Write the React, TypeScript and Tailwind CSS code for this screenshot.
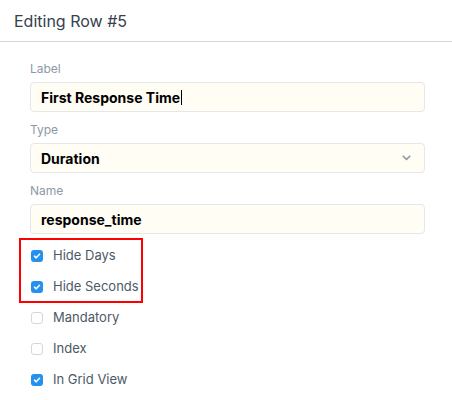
import React from 'react';

const font = { fontFamily: 'Inter, "Noto Sans", sans-serif' };

function Check({ checked }: { checked: boolean }) {
  if (checked) {
    return (
      <span className="flex h-[12px] w-[12px] shrink-0 items-center justify-center rounded-[3px] bg-[#2490ef]">
        <svg width="8" height="8" viewBox="0 0 8 8" fill="none">
          <path d="M1.5 4.2 L3.2 5.8 L6.5 2.3" stroke="white" strokeWidth="1.6" strokeLinecap="round" strokeLinejoin="round" />
        </svg>
      </span>
    );
  }
  return <span className="h-[12px] w-[12px] shrink-0 rounded-[3px] border border-[#d1d8dd] bg-white" />;
}

function CheckRow({ label, checked }: { label: string; checked: boolean }) {
  return (
    <div className="flex h-[31px] items-center gap-[10px] whitespace-nowrap pl-[1px]">
      <Check checked={checked} />
      <span className="text-[13px] text-[#4c5a67]">{label}</span>
    </div>
  );
}

function Field({ label, children }: { label: string; children: React.ReactNode }) {
  return (
    <div className="mb-[9px]">
      <div className="mb-[4px] h-[18px] text-[12px] leading-[18px] text-[#8d99a6]">{label}</div>
      {children}
    </div>
  );
}

export default function App() {
  return (
    <div className="h-[400px] w-[452px] bg-white" style={font}>
      <div className="flex h-[42px] items-center border-b border-[#d1d8dd] px-[14px]">
        <span className="text-[16px] text-[#36414c]">Editing Row #5</span>
      </div>

      <div className="pl-[30px] pr-[27px] pt-[18px]">
        <Field label="Label">
          <div className="flex h-[30px] items-center rounded-[4px] border border-[#e4e8ea] bg-[#fffdf4] px-[10px]">
            <span className="text-[14px] font-bold text-black">First Response Time</span>
            <span className="ml-[1px] h-[15px] w-[1px] bg-black" />
          </div>
        </Field>

        <Field label="Type">
          <div className="flex h-[30px] items-center justify-between rounded-[4px] border border-[#e4e8ea] bg-[#fffdf4] pl-[10px] pr-[13px]">
            <span className="text-[14px] font-bold text-black">Duration</span>
            <svg width="9" height="6" viewBox="0 0 9 6" fill="none">
              <path d="M1.2 1.2 L4.5 4.4 L7.8 1.2" stroke="#8d99a6" strokeWidth="1.6" strokeLinecap="round" strokeLinejoin="round" />
            </svg>
          </div>
        </Field>

        <div>
          <div className="mb-[4px] h-[18px] text-[12px] leading-[18px] text-[#8d99a6]">Name</div>
          <div className="flex h-[30px] items-center rounded-[4px] border border-[#e4e8ea] bg-[#fffdf4] px-[10px]">
            <span className="text-[14px] font-bold text-black">response_time</span>
          </div>
        </div>

        <div className="mt-[6px]">
          <div className="relative w-[102px]">
            <span className="pointer-events-none absolute -left-[11px] -top-[2px] h-[65px] w-[124px] border-2 border-[#ff0000]" />
            <CheckRow label="Hide Days" checked />
            <CheckRow label="Hide Seconds" checked />
          </div>
          <CheckRow label="Mandatory" checked={false} />
          <CheckRow label="Index" checked={false} />
          <CheckRow label="In Grid View" checked />
        </div>
      </div>
    </div>
  );
}
